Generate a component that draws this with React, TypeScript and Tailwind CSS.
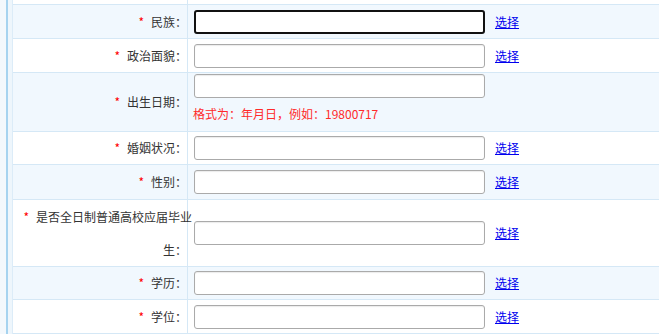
const rows = [
  { label: "民族：", h: "h-[34px]", bg: "bg-[#f1f8fe]", link: true, focus: true },
  { label: "政治面貌：", h: "h-[34px]", bg: "bg-white", link: true },
  { label: "出生日期：", h: "h-[59px]", bg: "bg-[#f1f8fe]", link: false, hint: true },
  { label: "婚姻状况：", h: "h-[33px]", bg: "bg-white", link: true },
  { label: "性别：", h: "h-[35px]", bg: "bg-[#f1f8fe]", link: true },
  { label: "是否全日制普通高校应届毕业生：", h: "h-[67px]", bg: "bg-white", link: true, long: true },
  { label: "学历：", h: "h-[33px]", bg: "bg-[#f1f8fe]", link: true },
  { label: "学位：", h: "h-[34px]", bg: "bg-white", link: true },
];

function Star() {
  return <span className="text-[#ff0000] mr-[7px]">*</span>;
}

function Field({ focus }: { focus?: boolean }) {
  return (
    <input
      type="text"
      className={
        focus
          ? "w-[291px] h-[24px] bg-white border-2 border-[#111111] rounded-[3px] outline-none"
          : "w-[291px] h-[24px] bg-white border border-[#aaaaaa] rounded-[3px] shadow-[inset_0_1px_1px_rgba(0,0,0,0.08)] outline-none"
      }
    />
  );
}

export default function App() {
  return (
    <div
      className="w-[659px] h-[334px] overflow-hidden flex bg-[#f3f8fc] text-[12px] text-[#333333]"
      style={{ fontFamily: '"Noto Sans CJK SC", "Noto Sans", sans-serif' }}
    >
      <div className="w-[6px] shrink-0" />
      <div className="w-[2px] shrink-0 bg-[#a6d3ef]" />
      <div className="w-[4px] shrink-0 bg-[#eef6fc]" />
      <div className="w-[1px] shrink-0 bg-[#dcecf8]" />
      <div className="flex-1 flex flex-col bg-white">
        <div className="h-[4px] flex">
          <div className="w-[175px] border-r border-[#d5e8f6]" />
        </div>
        {rows.map((r) => (
          <div key={r.label} className={`flex border-t border-[#d5e8f6] ${r.h} ${r.bg} shrink-0`}>
            <div className="w-[175px] shrink-0 border-r border-[#d5e8f6] flex items-center justify-end">
              {r.long ? (
                <div className="text-right leading-[33px] whitespace-nowrap">
                  <div className="-mr-[5px]">
                    <Star />
                    是否全日制普通高校应届毕业
                  </div>
                  <div>生：</div>
                </div>
              ) : (
                <div className="whitespace-nowrap leading-[16px]">
                  <Star />
                  {r.label}
                </div>
              )}
            </div>
            {r.hint ? (
              <div className="flex flex-col pl-[6px] pt-[1px]">
                <Field />
                <div className="mt-[8px] leading-[16px] text-[#ff2a2a] -ml-[1px]">格式为：年月日，例如：19800717</div>
              </div>
            ) : (
              <div className="flex items-center pl-[6px]">
                <Field focus={r.focus} />
                {r.link && (
                  <a href="#" className="ml-[10px] text-[#0000ee] underline leading-[16px]">
                    选择
                  </a>
                )}
              </div>
            )}
          </div>
        ))}
        <div className="flex-1 border-t border-[#d5e8f6] bg-[#f5f2f2]" />
      </div>
    </div>
  );
}
